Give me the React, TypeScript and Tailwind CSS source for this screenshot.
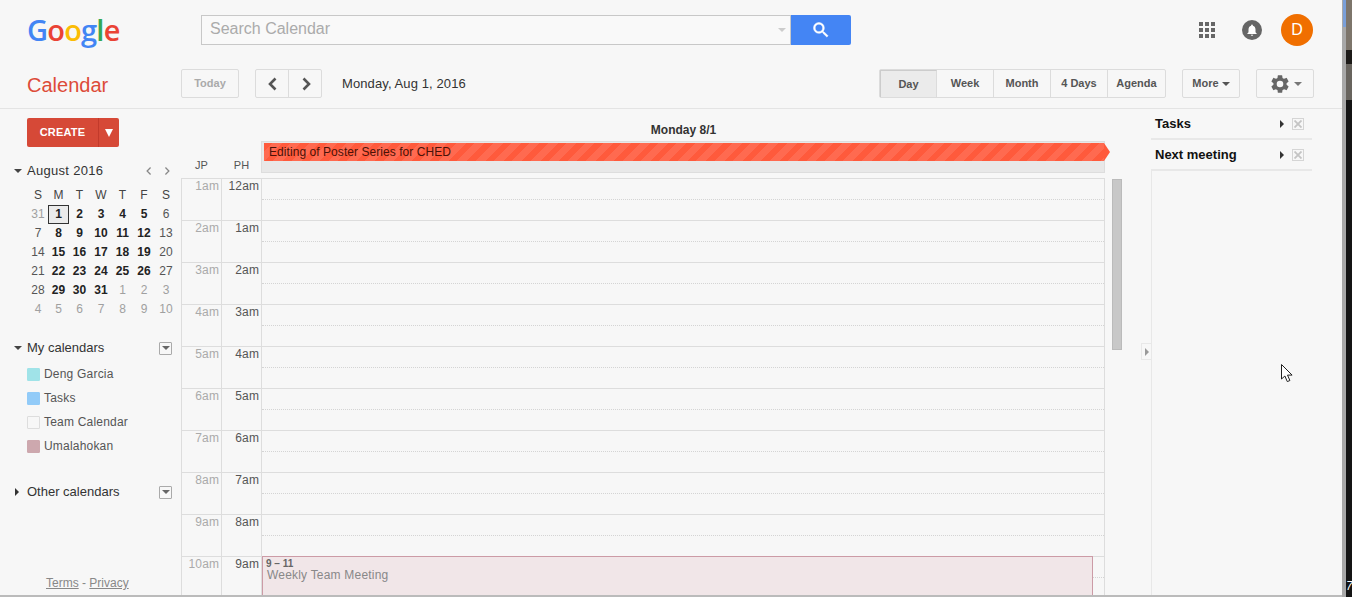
import React from 'react';

const hours = [
  ['1am', '12am'], ['2am', '1am'], ['3am', '2am'], ['4am', '3am'], ['5am', '4am'],
  ['6am', '5am'], ['7am', '6am'], ['8am', '7am'], ['9am', '8am'], ['10am', '9am'],
];

const weekDays = ['S', 'M', 'T', 'W', 'T', 'F', 'S'];

type Day = { label: number; kind: 'bold' | 'plain' | 'faded' | 'today' };
const plain = [6, 7, 13, 14, 20, 21, 27, 28];
const miniDays: Day[] = [
  { label: 31, kind: 'faded' },
  ...Array.from({ length: 31 }, (_, i): Day => ({
    label: i + 1,
    kind: i === 0 ? 'today' : plain.includes(i + 1) ? 'plain' : 'bold',
  })),
  ...[1, 2, 3, 4, 5, 6, 7, 8, 9, 10].map((label): Day => ({ label, kind: 'faded' })),
];

const calendars = [
  { name: 'Deng Garcia', swatch: 'bg-[#a0e3e8] border-[#a0e3e8]' },
  { name: 'Tasks', swatch: 'bg-[#92cbf8] border-[#92cbf8]' },
  { name: 'Team Calendar', swatch: 'bg-[#f7f7f7] border-[#dddddd]' },
  { name: 'Umalahokan', swatch: 'bg-[#cda8ae] border-[#cda8ae]' },
];

const views = ['Day', 'Week', 'Month', '4 Days', 'Agenda'];

function Caret({ className = 'border-t-[#444]' }: { className?: string }) {
  return <span className={`inline-block w-0 h-0 border-x-[4px] border-x-transparent border-t-[4px] ${className}`} />;
}

function RightCaret() {
  return <span className="inline-block w-0 h-0 border-y-[4px] border-y-transparent border-l-[4px] border-l-[#333]" />;
}

function MenuBox() {
  return (
    <span className="w-[13px] h-[13px] border border-[#aaaaaa] rounded-[1px] flex items-center justify-center">
      <Caret className="border-t-[#666]" />
    </span>
  );
}

function CloseBox() {
  return (
    <span className="w-[12px] h-[12px] border border-[#d5d5d5] flex items-center justify-center">
      <svg width="8" height="8" viewBox="0 0 8 8">
        <path d="M0.5 0.5L7.5 7.5M7.5 0.5L0.5 7.5" stroke="#c4c4c4" strokeWidth="1.8" />
      </svg>
    </span>
  );
}

function Chevron({ dir, size = 16, color = '#555', weight = 2.6 }: { dir: 'left' | 'right'; size?: number; color?: string; weight?: number }) {
  return (
    <svg width={size} height={size} viewBox="0 0 16 16" fill="none">
      <path d={dir === 'left' ? 'M10.5 2.5L5 8l5.5 5.5' : 'M5.5 2.5L11 8l-5.5 5.5'} stroke={color} strokeWidth={weight} />
    </svg>
  );
}

function Header() {
  return (
    <div className="h-[69px] flex items-start shrink-0">
      <div className="w-[201px] pl-[27px] pt-[8px] text-[29px] leading-[44px] font-semibold tracking-[-0.8px] [font-family:'Open_Sans',sans-serif]">
        <span className="text-[#4285f4]">G</span>
        <span className="text-[#ea4335]">o</span>
        <span className="text-[#fbbc05]">o</span>
        <span className="text-[#4285f4]">g</span>
        <span className="text-[#34a853]">l</span>
        <span className="text-[#ea4335]">e</span>
      </div>
      <div className="mt-[15px] w-[590px] h-[30px] border border-[#c8c8c8] bg-[#f9f9f9] flex items-center justify-between pl-[8px] pr-[4px]">
        <span className="text-[16px] leading-[24px] mt-[-2px] text-[#ababab]">Search Calendar</span>
        <Caret className="border-t-[#cccccc]" />
      </div>
      <div className="mt-[15px] w-[60px] h-[30px] bg-[#4485f4] rounded-r-[2px] flex items-center justify-center">
        <svg width="20" height="20" viewBox="0 0 24 24" fill="#ffffff" stroke="#ffffff" strokeWidth="0.6">
          <path d="M15.5 14h-.79l-.28-.27A6.471 6.471 0 0 0 16 9.5 6.5 6.5 0 1 0 9.5 16c1.61 0 3.09-.59 4.23-1.57l.27.28v.79l5 4.99L20.49 19l-4.99-5zm-6 0C7.01 14 5 11.99 5 9.5S7.01 5 9.5 5 14 7.01 14 9.5 11.99 14 9.5 14z" />
        </svg>
      </div>
      <div className="ml-[348px] mt-[22px] grid grid-cols-3 gap-[2px]">
        {Array.from({ length: 9 }, (_, i) => (
          <span key={i} className="w-[4px] h-[4px] bg-[#666666]" />
        ))}
      </div>
      <div className="ml-[27px] mt-[20px] w-[20px] h-[20px] rounded-full bg-[#666666] flex items-center justify-center">
        <svg width="14" height="14" viewBox="0 0 24 24" fill="#ffffff">
          <path d="M12 22c1.1 0 2-.9 2-2h-4c0 1.1.9 2 2 2zm6-6v-5c0-3.07-1.63-5.64-4.5-6.32V4c0-.83-.67-1.5-1.5-1.5s-1.5.67-1.5 1.5v.68C7.64 5.36 6 7.92 6 11v5l-2 2v1h16v-1l-2-2z" />
        </svg>
      </div>
      <div className="ml-[19px] mt-[14px] w-[32px] h-[32px] rounded-full bg-[#f06f00] text-white text-[16px] flex items-center justify-center">D</div>
    </div>
  );
}

function Toolbar() {
  const cell = 'h-[29px] flex items-center justify-center text-[11px] font-bold text-[#555]';
  return (
    <div className="h-[40px] flex items-start shrink-0 border-b border-[#e4e4e4]">
      <div className="w-[181px] pl-[27px] text-[20px] leading-[32px] text-[#dd4b39]">Calendar</div>
      <div className={`${cell} w-[58px] border border-[#dcdcdc] rounded-[2px] text-[#aaaaaa]`}>Today</div>
      <div className="ml-[16px] h-[29px] w-[67px] flex border border-[#dcdcdc] rounded-[2px]">
        <span className="w-[33px] border-r border-[#dcdcdc] flex items-center justify-center pl-[2px]"><Chevron dir="left" /></span>
        <span className="flex-1 flex items-center justify-center pl-[2px]"><Chevron dir="right" /></span>
      </div>
      <div className="ml-[20px] w-[537px] h-[29px] flex items-center text-[13px] text-[#333] tracking-[0.1px]">Monday, Aug 1, 2016</div>
      <div className="flex h-[29px] w-[287px] border border-[#dcdcdc] rounded-[2px]">
        {views.map((view, i) => (
          <div
            key={view}
            className={`${i < 4 ? 'w-[57px] border-r border-[#dcdcdc]' : 'flex-1'} ${i === 0 ? 'bg-[#ebebeb] text-[#444] border-l border-t border-l-[#cccccc] border-t-[#cccccc]' : ''} h-full flex items-center justify-center text-[11px] font-bold text-[#555]`}
          >
            {view}
          </div>
        ))}
      </div>
      <div className={`${cell} ml-[16px] w-[58px] border border-[#dcdcdc] rounded-[2px] gap-[3px]`}>
        More <Caret className="border-t-[#555]" />
      </div>
      <div className={`${cell} ml-[16px] w-[58px] border border-[#dcdcdc] rounded-[2px] gap-[3px]`}>
        <svg width="22" height="22" viewBox="0 0 24 24" fill="#666666">
          <path d="M19.14 12.94c.04-.3.06-.61.06-.94 0-.32-.02-.64-.07-.94l2.03-1.58a.49.49 0 0 0 .12-.61l-1.92-3.32a.488.488 0 0 0-.59-.22l-2.39.96c-.5-.38-1.03-.7-1.62-.94l-.36-2.54a.484.484 0 0 0-.48-.41h-3.84c-.24 0-.43.17-.47.41l-.36 2.54c-.59.24-1.13.57-1.62.94l-2.39-.96c-.22-.08-.47 0-.59.22L2.74 8.87c-.12.21-.08.47.12.61l2.03 1.58c-.05.3-.09.63-.09.94s.02.64.07.94l-2.03 1.58a.49.49 0 0 0-.12.61l1.92 3.32c.12.22.37.29.59.22l2.39-.96c.5.38 1.03.7 1.62.94l.36 2.54c.05.24.24.41.48.41h3.84c.24 0 .44-.17.47-.41l.36-2.54c.59-.24 1.13-.56 1.62-.94l2.39.96c.22.08.47 0 .59-.22l1.92-3.32c.12-.22.07-.47-.12-.61l-2.01-1.58zM12 15.6A3.6 3.6 0 1 1 12 8.4a3.6 3.6 0 0 1 0 7.2z" />
        </svg>
        <Caret className="border-t-[#777]" />
      </div>
    </div>
  );
}

function MiniCalendar() {
  return (
    <div>
      <div className="flex items-center h-[20px] mt-[14px]">
        <span className="w-[27px] pl-[14px] flex"><Caret /></span>
        <span className="text-[13px] tracking-[0.3px] text-[#333] w-[117px]">August 2016</span>
        <Chevron dir="left" size={10} color="#888" weight={2} />
        <span className="w-[8px]" />
        <Chevron dir="right" size={10} color="#888" weight={2} />
      </div>
      <div className="ml-[28px] mt-[5px] grid grid-cols-[20px_21px_21px_22px_21px_22px_22px] auto-rows-[19px] text-[12px] leading-[19px] text-center">
        {weekDays.map((d, i) => (
          <div key={i} className="text-[#444]">{d}</div>
        ))}
        {miniDays.map((day, i) => (
          <div
            key={i}
            className={
              day.kind === 'today'
                ? 'font-bold text-[#222] bg-[#ebebeb] border border-[#333] leading-[17px]'
                : day.kind === 'bold'
                  ? 'font-bold text-[#222]'
                  : day.kind === 'plain'
                    ? 'text-[#555]'
                    : 'text-[#a0a0a0]'
            }
          >
            {day.label}
          </div>
        ))}
      </div>
    </div>
  );
}

function Sidebar() {
  return (
    <div className="w-[181px] shrink-0 flex flex-col">
      <div className="ml-[27px] mt-[9px] w-[92px] h-[29px] bg-[#d64937] rounded-[2px] flex text-white">
        <span className="w-[72px] border-r border-[#c23a2b] flex items-center justify-center text-[11px] font-bold tracking-[0.2px]">CREATE</span>
        <span className="flex-1 flex items-center justify-center">
          <span className="w-0 h-0 border-x-[4px] border-x-transparent border-t-[8px] border-t-white" />
        </span>
      </div>
      <MiniCalendar />
      <div className="mt-[19px] h-[20px] flex items-center text-[13px] text-[#333]">
        <span className="w-[27px] pl-[14px] flex"><Caret /></span>
        <span className="w-[132px]">My calendars</span>
        <MenuBox />
      </div>
      <div className="mt-[4px] flex flex-col">
        {calendars.map((cal) => (
          <div key={cal.name} className="h-[24px] flex items-center pl-[27px] text-[12px] text-[#555] tracking-[0.2px]">
            <span className={`w-[13px] h-[13px] border rounded-[1px] mr-[4px] ${cal.swatch}`} />
            {cal.name}
          </div>
        ))}
      </div>
      <div className="mt-[24px] h-[20px] flex items-center text-[13px] text-[#333]">
        <span className="w-[27px] pl-[15px] flex"><RightCaret /></span>
        <span className="w-[132px]">Other calendars</span>
        <MenuBox />
      </div>
      <div className="mt-auto h-[21px] pl-[46px] text-[12px] text-[#888]">
        <span className="underline">Terms</span> - <span className="underline">Privacy</span>
      </div>
    </div>
  );
}

function DayGrid() {
  return (
    <div className="w-[960px] shrink-0 flex flex-col">
      <div className="h-[69px] flex shrink-0">
        <div className="w-[80px] flex items-end pb-[5px] text-[11px] text-[#555] text-center">
          <span className="w-[41px]">JP</span>
          <span className="w-[39px]">PH</span>
        </div>
        <div className="w-[844px] flex flex-col">
          <div className="h-[32px] pt-[14px] pl-[1px] text-center text-[12px] leading-[14px] font-bold text-[#333]">Monday 8/1</div>
          <div className="h-[32px] bg-[#e8e8e8] border border-[#dddddd] pl-[2px] pt-[1px] relative">
            <div className="h-[18px] bg-[repeating-linear-gradient(135deg,#ff5a3c_0px,#ff5a3c_6px,#ff6a50_6px,#ff6a50_13px)] text-[12px] leading-[18px] pl-[5px] text-[#4a1208] tracking-[0.06px]">
              Editing of Poster Series for CHED
            </div>
            <span className="absolute right-[-6px] top-[1px] w-0 h-0 border-y-[9px] border-y-transparent border-l-[6px] border-l-[#ff5a3c]" />
          </div>
        </div>
      </div>
      <div className="flex flex-1 min-h-0">
        <div className="w-[924px] overflow-hidden border-l border-[#dddddd]">
          {hours.map(([jp, ph], i) => (
            <div key={jp} className="flex h-[42px] border-t border-[#dddddd]">
              <div className="w-[40px] border-r border-[#dddddd] text-right pr-[2px] text-[12px] leading-[14px] text-[#aaaaaa] tracking-[0.1px]">{jp}</div>
              <div className="w-[40px] border-r border-[#dddddd] text-right pr-[2px] text-[12px] leading-[14px] text-[#555] tracking-[0.1px]">{ph}</div>
              <div className="flex-1 relative border-r border-[#dddddd]">
                <div className="h-[21px] border-b border-dotted border-[#d4d4d4]" />
                {i === 9 && (
                  <div className="absolute left-0 top-[-1px] w-[831px] h-[42px] bg-[#f1e6e8] border border-[#cc9ba6] pl-[3px] pt-[1px]">
                    <div className="text-[10px] leading-[11px] font-bold text-[#666]">9 – 11</div>
                    <div className="ml-[1px] text-[12px] leading-[13px] text-[#888] tracking-[0.2px]">Weekly Team Meeting</div>
                  </div>
                )}
              </div>
            </div>
          ))}
        </div>
        <div className="flex-1 pl-[7px] pt-[1px]">
          <div className="w-[10px] h-[171px] bg-[#c8c8c8] border border-[#bbbbbb]" />
        </div>
      </div>
    </div>
  );
}

function TaskRow({ label }: { label: string }) {
  return (
    <div className="h-[31px] border-b-2 border-[#e8e8e8] flex items-center pl-[4px] text-[13px] font-bold text-[#111]">
      <span className="w-[125px]">{label}</span>
      <RightCaret />
      <span className="w-[8px]" />
      <CloseBox />
    </div>
  );
}

function RightPanel() {
  return (
    <div className="w-[161px] shrink-0 flex flex-col">
      <TaskRow label="Tasks" />
      <TaskRow label="Next meeting" />
      <div className="flex-1 border-l border-[#e8e8e8]" />
    </div>
  );
}

function WindowEdge() {
  return (
    <>
      <div className="w-[4px] shrink-0 bg-[#a8a8a8] flex flex-col">
        <div className="h-[27px] ml-[1px] bg-[#7a9fd8]" />
      </div>
      <div className="flex-1 flex flex-col bg-[#141414] text-[12px] text-white italic">
        <div className="h-[50px] bg-[#7d756b]" />
        <div className="h-[14px] bg-[#1c1a18]" />
        <div className="h-[36px] bg-[#68645e]" />
        <div className="flex-1" />
        <div className="h-[20px]">7</div>
      </div>
    </>
  );
}

export default function App() {
  return (
    <div className="w-[1352px] h-[597px] overflow-hidden flex bg-[#f7f7f7] [font-family:'Liberation_Sans',Arial,sans-serif] relative">
      <div className="w-[1342px] shrink-0 flex flex-col border-b-2 border-[#bbbbbb]">
        <Header />
        <Toolbar />
        <div className="flex-1 min-h-0 flex">
          <Sidebar />
          <DayGrid />
          <div className="w-[10px] shrink-0 pt-[234px]">
            <div className="h-[17px] border border-r-0 border-[#e8e8e8] flex items-center justify-center">
              <span className="w-0 h-0 border-y-[4px] border-y-transparent border-l-[4px] border-l-[#999]" />
            </div>
          </div>
          <RightPanel />
        </div>
      </div>
      <WindowEdge />
      {/* mouse pointer */}
      <svg className="absolute left-[1280px] top-[363px]" width="15" height="21" viewBox="0 0 15 21">
        <path d="M1.5 1.5V16l3.4-3 2.4 5.6 2.6-1.1-2.4-5.4h4.6z" fill="#ffffff" stroke="#222222" strokeWidth="1" />
      </svg>
    </div>
  );
}
